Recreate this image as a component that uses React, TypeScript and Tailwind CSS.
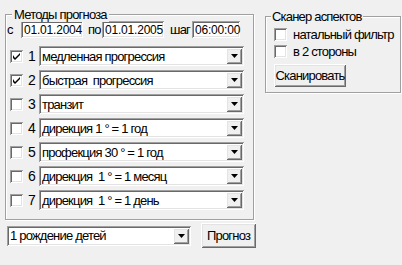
import React from 'react';

const sunken =
  'bg-white shadow-[inset_1px_1px_0_#a0a0a0,inset_-1px_-1px_0_#ffffff,inset_2px_2px_0_#696969,inset_-2px_-2px_0_#e3e3e3]';
const raised =
  'bg-[#f0f0f0] shadow-[inset_1px_1px_0_#ffffff,inset_-1px_-1px_0_#696969,inset_2px_2px_0_#e3e3e3,inset_-2px_-2px_0_#a0a0a0]';
const etched = 'border border-[#a0a0a0] shadow-[inset_1px_1px_0_#ffffff,1px_1px_0_#ffffff]';

const methods = [
  { label: 'медленная прогрессия', checked: true },
  { label: 'быстрая  прогрессия', checked: true },
  { label: 'транзит', checked: false },
  { label: 'дирекция 1 ° = 1 год', checked: false },
  { label: 'профекция 30 ° = 1 год', checked: false },
  { label: 'дирекция  1 ° = 1 месяц', checked: false },
  { label: 'дирекция  1 ° = 1 день', checked: false },
];

function CheckBox({ checked }: { checked?: boolean }) {
  return (
    <div className={`${sunken} w-[13px] h-[13px] shrink-0 flex items-center justify-center`}>
      {checked && (
        <svg width="7" height="7" viewBox="0 0 7 7">
          <path d="M0 2 L0 5 L2 7 L7 2 L7 0 L2 5 Z" fill="#000" />
        </svg>
      )}
    </div>
  );
}

function ArrowButton() {
  return (
    <div className={`${raised} w-[16px] h-[16px] shrink-0 flex items-center justify-center`}>
      <svg width="7" height="4" viewBox="0 0 7 4">
        <polygon points="0,0 7,0 3.5,4" fill="#000" />
      </svg>
    </div>
  );
}

function Combo({ text, className }: { text: string; className: string }) {
  return (
    <div className={`${sunken} ${className} h-[20px] flex items-center pl-[3px] pr-[2px]`}>
      <span className="flex-1 whitespace-pre leading-none">{text}</span>
      <ArrowButton />
    </div>
  );
}

function Field({ value, className }: { value: string; className: string }) {
  return (
    <div
      className={`${sunken} ${className} h-[17px] flex items-center pl-[3px] leading-none text-[12px] tracking-[-0.2px]`}
    >
      {value}
    </div>
  );
}

export default function App() {
  return (
    <div
      className="w-[402px] h-[265px] bg-[#f0f0f0] flex pl-[5px] text-[13px] tracking-[-0.8px] text-black"
      style={{ fontFamily: '"Liberation Sans", Arial, sans-serif' }}
    >
      <div className="flex flex-col pt-[14px]">
        <div className={`${etched} relative w-[249px] h-[206px]`}>
          <span className="absolute left-[6px] top-[-8px] bg-[#f0f0f0] px-[2px] leading-[15px]">
            Методы прогноза
          </span>
          <div className="flex items-center h-[17px] mt-[6px] ml-[1px]">
            <span className="w-[14px]">с</span>
            <Field value="01.01.2004" className="w-[62px]" />
            <span className="ml-[5px] w-[14px]">по</span>
            <Field value="01.01.2005" className="w-[62px]" />
            <span className="ml-[6px] w-[22px]">шаг</span>
            <Field value="06:00:00" className="w-[48px]" />
          </div>
          <div className="flex flex-col gap-[4px] mt-[8px] ml-[4px]">
            {methods.map((m, i) => (
              <div key={i} className="flex items-center h-[20px]">
                <CheckBox checked={m.checked} />
                <span className="ml-[5px] w-[11px] text-[14px] tracking-normal leading-none">{i + 1}</span>
                <Combo text={m.label} className="w-[205px]" />
              </div>
            ))}
          </div>
        </div>
        <div className="flex items-center mt-[3px] ml-[2px]">
          <Combo text="1 рождение детей" className="w-[184px]" />
          <button className={`${raised} ml-[10px] w-[55px] h-[25px] leading-none`}>Прогноз</button>
        </div>
      </div>
      <div className="pt-[16px] ml-[9px]">
        <div className={`${etched} relative w-[136px] h-[77px] pl-[8px]`}>
          <span className="absolute left-[5px] top-[-8px] bg-[#f0f0f0] px-[1px] leading-[15px]">
            Сканер аспектов
          </span>
          <div className="flex flex-col gap-[4px] mt-[11px]">
            <div className="flex items-center h-[13px]">
              <CheckBox />
              <span className="ml-[6px] leading-none">натальный фильтр</span>
            </div>
            <div className="flex items-center h-[13px]">
              <CheckBox />
              <span className="ml-[6px] leading-none">в 2 стороны</span>
            </div>
          </div>
          <button className={`${raised} mt-[6px] w-[72px] h-[23px] leading-none`}>Сканировать</button>
        </div>
      </div>
    </div>
  );
}
